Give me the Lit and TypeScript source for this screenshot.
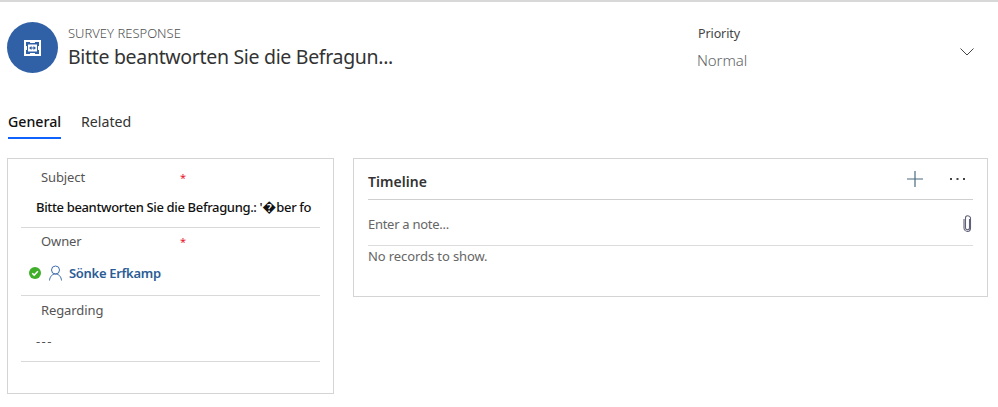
import { css, html, LitElement } from 'lit';
import { customElement } from 'lit/decorators.js';

@customElement('app-root')
export class AppRoot extends LitElement {
  static styles = css`
  :host {
    display: block;
    width: 998px;
    height: 407px;
    overflow: hidden;
    background: #fff;
    border-top: 2px solid #d8d8d8;
    box-sizing: border-box;
    font-family: "Noto Sans", "Open Sans", sans-serif;
    color: #333;
  }

  .header {
    display: flex;
    height: 72px;
    padding: 20px 0 0 7px;
    box-sizing: border-box;
  }
  .avatar {
    width: 51px;
    height: 51px;
    border-radius: 50%;
    background: #3060a5;
    display: flex;
    align-items: center;
    justify-content: center;
    flex: none;
  }
  .heading { margin-left: 10px; width: 630px; }
  .type { font-size: 13px; line-height: 17px; margin-top: 3px; color: #505050; font-weight: 300; }
  .title { font-size: 19.5px; line-height: 27px; color: #333; letter-spacing: -0.32px; margin-top: 1px; }
  .priority { width: 262px; padding-top: 2px; }
  .priority .label { font-size: 12.5px; line-height: 18px; color: #444; letter-spacing: -0.1px; margin-top: 1px; }
  .priority .level { font-size: 15px; line-height: 21px; color: #5f6468; margin-top: 7px; font-weight: 300; letter-spacing: -0.1px; margin-left: -1px; }
  .chev { margin-top: 26px; flex: none; }

  .tabs {
    display: flex;
    gap: 20px;
    padding: 38px 0 0 8px;
    font-size: 14.2px;
    line-height: 20px;
    height: 66px;
    box-sizing: border-box;
  }
  .tab { height: 27px; color: #333; }
  .tab.active { color: #111; font-weight: 500; border-bottom: 2px solid #0f62fe; height: 25px; width: 53px; }

  .main {
    display: flex;
    align-items: flex-start;
    gap: 19px;
    padding: 18px 0 0 7px;
  }
  .panel { border: 1px solid #d4d4d4; box-sizing: border-box; background: #fff; }
  .form { width: 327px; height: 236px; padding: 0 13px; }
  .field { border-bottom: 1px solid #d9d9d9; box-sizing: border-box; }
  .field.one { height: 69px; }
  .field.two { height: 68px; }
  .field.three { height: 66px; }
  .name {
    display: flex;
    font-size: 13px;
    line-height: 18px;
    color: #555;
    padding: 4px 0 0 20px;
    letter-spacing: -0.1px;
  }
  .one .name { padding-top: 9px; }
  .three .name { padding-top: 5px; }
  .name span:first-child { width: 139px; }
  .star { color: #e8142c; font-size: 11px; line-height: 14px; margin-top: 3px; }
  .value { font-size: 13px; line-height: 18px; padding-left: 15px; color: #111; letter-spacing: -0.35px; white-space: nowrap; margin-top: 12px; font-weight: 500; }
  .bad { font-size: 14px; line-height: 14px; letter-spacing: 0; }
  .owner { display: flex; align-items: center; padding-left: 8px; margin-top: 14px; height: 18px; }
  .owner a { font-size: 13px; font-weight: 600; color: #2b5c95; letter-spacing: -0.3px; margin-left: 7px; }
  .owner .presence { margin-right: 8px; }
  .empty { font-size: 13px; line-height: 18px; padding-left: 15px; margin-top: 13px; color: #555; letter-spacing: 1.4px; }

  .timeline { width: 635px; height: 139px; padding: 0 14px; }
  .tl-head {
    display: flex;
    align-items: center;
    height: 41px;
    border-bottom: 1px solid #cfcfcf;
    box-sizing: border-box;
    font-size: 14px;
    font-weight: 600;
    color: #333;
    letter-spacing: 0.05px;
  }
  .tl-head .t { flex: 1; margin-top: 5px; }
  .dots { margin: 0 8px 0 27px; }
  .note {
    display: flex;
    align-items: center;
    justify-content: space-between;
    height: 46px;
    padding: 2px 1px 0 0;
    border-bottom: 1px solid #dcdcdc;
    box-sizing: border-box;
    font-size: 13px;
    color: #666;
    letter-spacing: -0.28px;
  }
  .none { font-size: 13px; line-height: 18px; color: #666; letter-spacing: -0.1px; margin-top: 1px; }
  `

  protected render() {
    return html`
      <div class="header">
        <div class="avatar">
          <svg width="17" height="16" viewBox="0 0 17 16">
            <rect width="17" height="16" fill="#fff"/>
            <path d="M2 2h4v1h5V2h4v4h-1v4h1v4h-4v-1H6v1H2v-4h1V6H2z" fill="#3060a5"/>
            <rect x="4" y="4.500" width="9" height="7" fill="#fff"/>
            <path d="M5 8l2.500-2v1.400h2V6L12 8l-2.500 2V8.600h-2V10z" fill="#3060a5"/>
          </svg>
        </div>
        <div class="heading">
          <div class="type">SURVEY RESPONSE</div>
          <div class="title">Bitte beantworten Sie die Befragun...</div>
        </div>
        <div class="priority">
          <div class="label">Priority</div>
          <div class="level">Normal</div>
        </div>
        <svg class="chev" width="14" height="8" viewBox="0 0 14 8">
          <path d="M.5.500 7 7l6.500-6.500" fill="none" stroke="#444" stroke-width="1"/>
        </svg>
      </div>

      <div class="tabs">
        <div class="tab active">General</div>
        <div class="tab">Related</div>
      </div>

      <div class="main">
        <div class="panel form">
          <div class="field one">
            <div class="name"><span>Subject</span><span class="star">*</span></div>
            <div class="value">Bitte beantworten Sie die Befragung.: '<span class="bad">�</span>ber fo</div>
          </div>
          <div class="field two">
            <div class="name"><span>Owner</span><span class="star">*</span></div>
            <div class="owner">
              <svg class="presence" width="12" height="12" viewBox="0 0 12 12">
                <circle cx="6" cy="6" r="6" fill="#3fae29"/>
                <path d="M3.200 6.200 5.200 8.100 8.900 4.300" fill="none" stroke="#fff" stroke-width="1.500"/>
              </svg>
              <svg width="13" height="16" viewBox="0 0 13 16">
                <circle cx="6.500" cy="5" r="4" fill="none" stroke="#3f6ea8" stroke-width="1"/>
                <path d="M.5 15.500c.3-3.800 2.600-6.500 6-6.500s5.700 2.700 6 6.500" fill="none" stroke="#3f6ea8" stroke-width="1"/>
              </svg>
              <a>Sönke Erfkamp</a>
            </div>
          </div>
          <div class="field three">
            <div class="name"><span>Regarding</span></div>
            <div class="empty">---</div>
          </div>
        </div>

        <div class="panel timeline">
          <div class="tl-head">
            <span class="t">Timeline</span>
            <svg width="16" height="16" viewBox="0 0 16 16">
              <path d="M8 0v16M0 8h16" stroke="#4a6b80" stroke-width="1.200" fill="none"/>
            </svg>
            <svg class="dots" width="15" height="2" viewBox="0 0 15 2">
              <path d="M0 0h2v2H0zM6.500 0h2v2h-2zM13 0h2v2h-2z" fill="#444"/>
            </svg>
          </div>
          <div class="note">
            <span>Enter a note...</span>
            <svg width="9" height="17" viewBox="0 0 9 17">
              <path d="M6.500 4v9c0 1-.8 1.700-2 1.700s-2-.7-2-1.700V3c0-1.300.8-2.200 2-2.200s3 .9 3 2.200v10c0 2-1.300 3.400-3 3.400S1 15 1 13V4" fill="none" stroke="#5f5f78" stroke-width="1.100"/>
            </svg>
          </div>
          <div class="none">No records to show.</div>
        </div>
      </div>
    `
  }
}
